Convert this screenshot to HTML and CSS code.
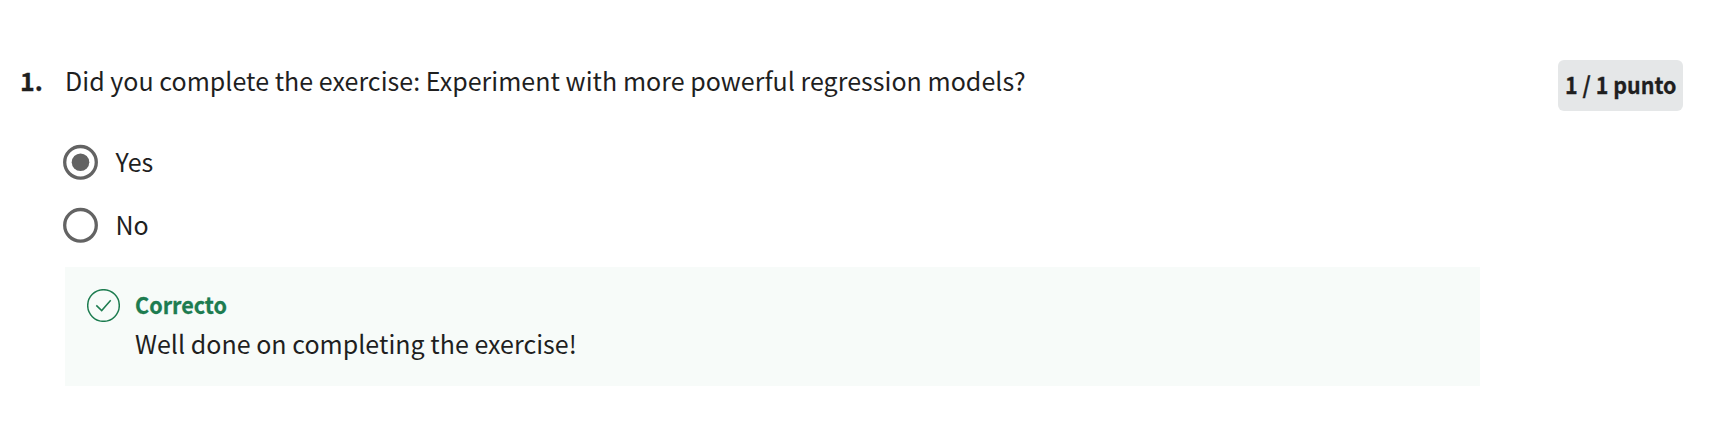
FILE: index.html
```html
<!DOCTYPE html>
<html lang="es">
<head>
<meta charset="utf-8">
<title>Quiz</title>
<link rel="stylesheet" href="styles.css">
</head>
<body>
<main class="question">
  <div class="number">1.</div>
  <div class="body">
    <h1 class="prompt">Did you complete the exercise: Experiment with more powerful regression models?</h1>
    <div class="options">
      <div class="option"><svg class="radio" viewBox="0 0 35 36"><circle class="ring" cx="17.5" cy="18.3" r="15.8"/><circle class="dot" cx="17.5" cy="18.3" r="8.8"/></svg><span class="label">Yes</span></div>
      <div class="option"><svg class="radio" viewBox="0 0 35 36"><circle class="ring" cx="17.5" cy="18.3" r="15.8"/></svg><span class="label">No</span></div>
    </div>
    <section class="feedback">
      <svg class="check" viewBox="0 0 33 33"><circle cx="16.5" cy="16.5" r="15.8"/><path d="M9.3 16.4l5.4 5.2 9-10.4"/></svg>
      <div class="message">
        <strong class="verdict">Correcto</strong>
        <p class="text">Well done on completing the exercise!</p>
      </div>
    </section>
  </div>
  <div class="points"><span class="score">1 / 1 punto</span></div>
</main>
</body>
</html>
```
FILE: styles.css
```css
* { box-sizing: border-box; }
body { margin: 0; background: #fff; color: #1f1f1f; font: 25px/40px "Noto Sans CJK SC", sans-serif; }
.question { display: flex; align-items: flex-start; padding: 60px 49px 0 20px; }
.number { width: 45px; flex: none; font-weight: 700; line-height: 40px; -webkit-text-stroke: 0.3px; }
.body { width: 1415px; flex: none; }
.prompt { margin: 0; font-size: 25px; letter-spacing: 0.03px; line-height: 40px; font-weight: 400; white-space: nowrap; }
.options { padding-top: 30px; }
.option { display: flex; align-items: center; gap: 17.5px; height: 63px; }
.radio { width: 35px; height: 36px; margin-left: -2px; }
.label { padding-bottom: 2px; }
.ring { fill: none; stroke: #636363; stroke-width: 3.3; }
.dot { fill: #636363; }
.feedback { display: flex; height: 119px; margin-top: 11px; padding: 22px; gap: 15px; background: #f7fbf9; }
.check { width: 33px; height: 33px; flex: none; fill: none; stroke: #1d7c50; stroke-width: 1.5; }
.message { line-height: 40px; }
.verdict { display: block; color: #1d7c50; font-size: 23px; line-height: 31px; transform: scaleX(0.937); transform-origin: left; -webkit-text-stroke: 0.3px; }
.text { margin: 0; padding-top: 3px; letter-spacing: 0.02px; }
.points { display: flex; justify-content: center; width: 125px; height: 51px; margin-left: auto; border-radius: 6px; background: #e5e7e8; font-size: 23px; line-height: 49px; font-weight: 700; white-space: nowrap; }
.score { transform: scaleX(0.933); -webkit-text-stroke: 0.3px; }
```
